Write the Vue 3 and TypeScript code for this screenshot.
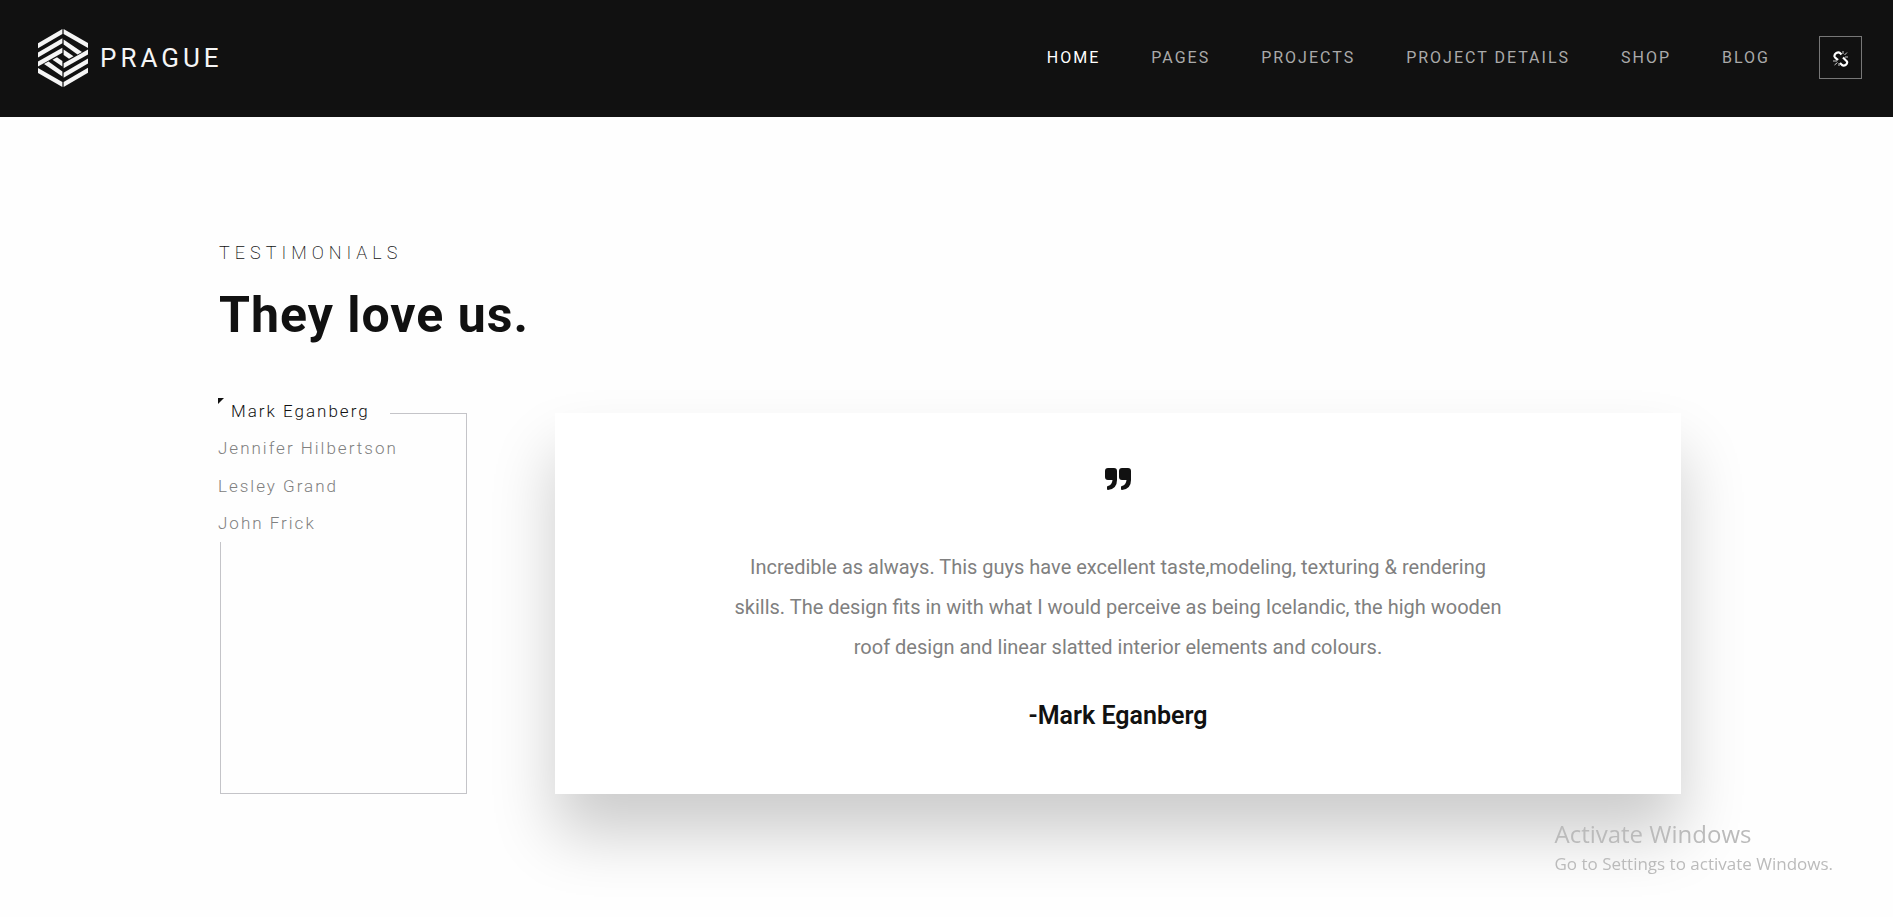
<script setup lang="ts">
import { ref, computed } from 'vue'

interface Testimonial {
  name: string
  text: string
}

const links: string[] = ['Home', 'Pages', 'Projects', 'Project details', 'Shop', 'Blog']

const quote =
  'Incredible as always. This guys have excellent taste,modeling, texturing & rendering skills. The design fits in with what I would perceive as being Icelandic, the high wooden roof design and linear slatted interior elements and colours.'

const people: Testimonial[] = [
  { name: 'Mark Eganberg', text: quote },
  { name: 'Jennifer Hilbertson', text: quote },
  { name: 'Lesley Grand', text: quote },
  { name: 'John Frick', text: quote },
]

// The logo mark is one half drawn twice, the second time turned by 180 degrees.
const halfTurns: number[] = [0, 180]

const active = ref(0)
const current = computed(() => people[active.value])
</script>

<template>
  <div class="page">
    <header class="header">
      <a class="logo" href="#">
        <svg class="mark" viewBox="0 0 50 58" aria-hidden="true">
          <g v-for="turn in halfTurns" :key="turn" fill="#f5f5f5" :transform="`rotate(${turn} 25 29)`">
            <path d="M0 14.2L24.4 0V5L0 19.200Z" />
            <path d="M0 23.4L24.4 9.300V14.300L0 28.400Z" />
            <path d="M0 32.600L24.400 18.800V23.800L0 37.600Z" />
            <path d="M6 35L10.500 32.600L24.400 42.400V47.400Z" />
            <path d="M14.500 30.700L19 28.300L24.400 32V37.400Z" />
            <path d="M0 39L24.400 53V58L0 44Z" />
          </g>
        </svg>
        <span class="wordmark">PRAGUE</span>
      </a>
      <nav class="nav" aria-label="Main">
        <a v-for="(l, i) in links" :key="l" href="#" :class="{ on: i === 0 }">{{ l }}</a>
      </nav>
      <button class="share" type="button" aria-label="Share">
        <svg viewBox="0 0 16 16" aria-hidden="true">
          <g fill="none" stroke="#fff" stroke-width="2.200">
            <path d="M8.500 3.500L7 2C5 0.500 1 2.500 1.500 5.500C2 7 4 8 5 9" />
            <path d="M7 12L9 14C11 15.500 15 13.500 14 10.500L10 6.500" />
          </g>
          <g stroke="#ccc" stroke-width="1">
            <path d="M10 3V0M11.500 4L14 1.500M12 6H15M0 10H4M1.500 14L4.500 11.500M6 12V15" />
          </g>
        </svg>
      </button>
    </header>

    <main class="main">
      <p class="eyebrow">Testimonials</p>
      <h2 class="title">They love us.</h2>
      <div class="row">
        <aside class="frame">
          <ul class="names">
            <li v-for="(p, i) in people" :key="p.name">
              <button type="button" :class="{ on: i === active }" @click="active = i">{{ p.name }}</button>
            </li>
          </ul>
        </aside>
        <article class="card">
          <svg class="quote" viewBox="0 0 26 22" aria-hidden="true">
            <g fill="#111">
              <path d="M3 0H9Q12 0 12 3V12Q12 21 3 22Q2 22 2 21V19Q2 18 3 18Q7 17 7.500 12H3Q0 12 0 9V3Q0 0 3 0Z" />
              <path d="M17 0H23Q26 0 26 3V12Q26 21 17 22Q16 22 16 21V19Q16 18 17 18Q21 17 21.500 12H17Q14 12 14 9V3Q14 0 17 0Z" />
            </g>
          </svg>
          <p class="text">{{ current.text }}</p>
          <h3 class="author">-{{ current.name }}</h3>
        </article>
      </div>
    </main>

    <div class="notice">
      <p class="notice-title">Activate Windows</p>
      <p class="notice-text">Go to Settings to activate Windows.</p>
    </div>
  </div>
</template>

<style>
body {
  margin: 0;
  background: #fefefe;
}
</style>

<style scoped>
.page {
  min-height: 100vh;
  font-family: Roboto, "Liberation Sans", sans-serif;
  color: #111;
}
.header {
  display: flex;
  align-items: center;
  height: 117px;
  padding: 0 31px 2px 38px;
  box-sizing: border-box;
  background: #111;
}
.logo {
  display: flex;
  align-items: center;
  gap: 12px;
  margin-right: auto;
  color: #f5f5f5;
  text-decoration: none;
}
.mark {
  width: 50px;
  height: 58px;
}
.wordmark {
  font-size: 26px;
  line-height: 30px;
  letter-spacing: 4px;
}
.nav {
  display: flex;
  gap: 51px;
  margin-right: 49px;
}
.nav a {
  font-size: 16px;
  line-height: 20px;
  letter-spacing: 2px;
  text-transform: uppercase;
  text-decoration: none;
  color: #aaa;
}
.nav a.on {
  color: #fff;
}
.share {
  display: grid;
  place-items: center;
  width: 43px;
  height: 43px;
  padding: 2px 0 0;
  border: 1px solid #777;
  background: none;
}
.share svg {
  width: 16px;
  height: 16px;
}
.main {
  padding: 123px 212px 0 219px;
}
.eyebrow {
  margin: 0;
  font-size: 18px;
  line-height: 26px;
  font-weight: 200;
  letter-spacing: 5px;
  text-transform: uppercase;
}
.title {
  margin: 19px 0 0;
  font-size: 50px;
  line-height: 60px;
  font-weight: 700;
  letter-spacing: 1px;
}
.row {
  display: flex;
  gap: 88px;
  margin: 68px 0 0 1px;
}
.frame {
  flex: 0 0 245px;
  border: 1px solid #c4c4c8;
}
.names {
  display: grid;
  grid-template-rows: repeat(4, 1fr);
  width: 172px;
  height: 150px;
  margin: -22px 0 0 -3px;
  padding: 0;
  background: #fefefe;
  list-style: none;
  white-space: nowrap;
}
.names li {
  display: flex;
  align-items: center;
}
.names button {
  position: relative;
  padding: 0;
  border: 0;
  background: none;
  font: 300 17px/26px Roboto, "Liberation Sans", sans-serif;
  letter-spacing: 2px;
  color: #808080;
  cursor: pointer;
}
.names button.on {
  padding-left: 13px;
  color: #111;
}
.names button.on::before {
  content: "";
  position: absolute;
  top: 0;
  left: 0;
  border-top: 6px solid #111;
  border-right: 6px solid transparent;
}
.card {
  display: flex;
  flex: 1;
  flex-direction: column;
  align-items: center;
  padding: 55px 0 61px;
  background: #fff;
  box-shadow: 0 40px 60px rgba(0, 0, 0, 0.2);
  text-align: center;
}
.quote {
  width: 26px;
  height: 22px;
}
.text {
  max-width: 790px;
  margin: 57px 0 0;
  font-size: 20px;
  line-height: 40px;
  color: #808080;
}
.author {
  margin: 32px 0 0;
  font-size: 25px;
  line-height: 34px;
  font-weight: 600;
}
.notice {
  position: fixed;
  right: 60px;
  bottom: 39px;
  font-family: "Open Sans", "Noto Sans", sans-serif;
  color: #bbb;
}
.notice p {
  margin: 0;
}
.notice-title {
  font-size: 24px;
  line-height: 32px;
}
.notice-text {
  font-size: 17px;
  line-height: 28px;
}
</style>
